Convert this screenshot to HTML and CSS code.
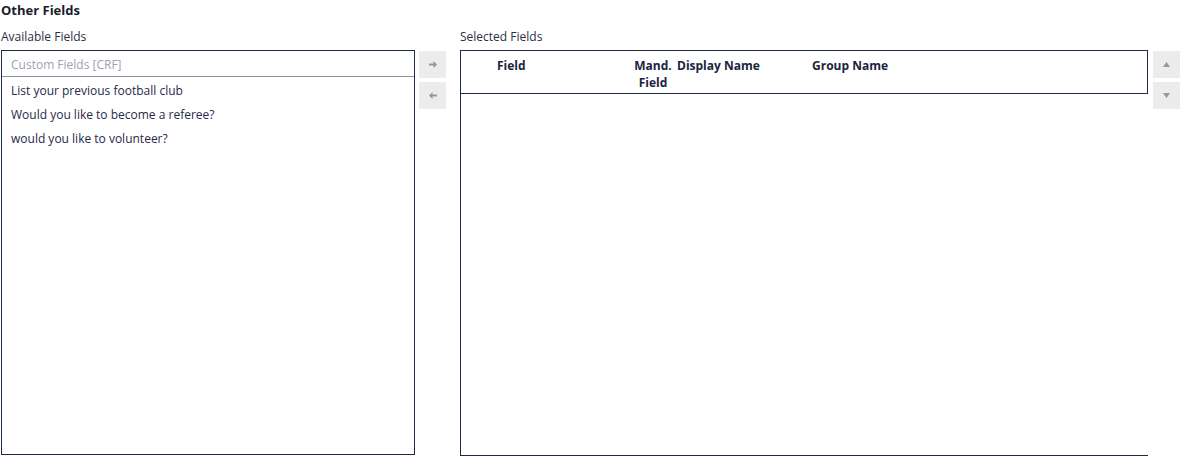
FILE: index.html
```html
<!DOCTYPE html>
<html>
<head>
<meta charset="utf-8">
<link rel="stylesheet" href="styles.css">
</head>
<body>
<div class="page">
  <h3 class="title">Other Fields</h3>
  <div class="columns">
    <div class="col-left">
      <div class="label">Available Fields</div>
      <div class="left-row">
        <div class="list-box">
          <div class="list-head">Custom Fields [CRF]</div>
          <div class="list-item">List your previous football club</div>
          <div class="list-item">Would you like to become a referee?</div>
          <div class="list-item">would you like to volunteer?</div>
        </div>
        <div class="btns">
          <div class="btn"><svg width="8" height="7" viewBox="0 0 8 7"><path d="M0 2.5h4.5V0L8 3.5 4.5 7V4.5H0z" fill="#9297a0"/></svg></div>
          <div class="btn"><svg width="8" height="7" viewBox="0 0 8 7"><path d="M8 2.5H3.5V0L0 3.5 3.5 7V4.5H8z" fill="#9297a0"/></svg></div>
        </div>
      </div>
    </div>
    <div class="col-right">
      <div class="label">Selected Fields</div>
      <div class="right-row">
        <div class="sel-box">
          <div class="sel-head">
            <div class="h-field">Field</div>
            <div class="h-mand">Mand.<br>Field</div>
            <div class="h-disp">Display Name</div>
            <div class="h-group">Group Name</div>
          </div>
        </div>
        <div class="btns">
          <div class="btn"><svg width="7" height="5" viewBox="0 0 7 5"><path d="M0 5L3.5 0 7 5z" fill="#9297a0"/></svg></div>
          <div class="btn"><svg width="7" height="5" viewBox="0 0 7 5"><path d="M0 0h7L3.5 5z" fill="#9297a0"/></svg></div>
        </div>
      </div>
    </div>
  </div>
</div>
</body>
</html>
```

FILE: styles.css
```css
html, body {
  margin: 0;
  padding: 0;
  background: #fff;
}
body {
  font-family: "Open Sans", "Noto Sans", sans-serif;
  font-size: 12px;
  color: #1b2440;
}
.page {
  padding: 2px 0 0 1px;
}
.title {
  margin: 0;
  font-size: 13px;
  font-weight: 700;
  line-height: 17px;
  color: #1a1d2b;
}
.columns {
  display: flex;
  margin-top: 9px;
}
.label {
  line-height: 16px;
  height: 21px;
  padding-top: 1px;
  color: #2b2f45;
}
.col-left {
  width: 459px;
}
.left-row, .right-row {
  display: flex;
  gap: 4px;
}
.list-box {
  width: 412px;
  height: 403px;
  border: 1px solid #1c2a46;
}
.list-head {
  height: 23px;
  line-height: 23px;
  padding-top: 2px;
  padding-left: 9px;
  color: #9ea3ab;
  border-bottom: 1px solid #8c95a6;
}
.list-item {
  height: 24px;
  line-height: 24px;
  padding-left: 9px;
  color: #262a4c;
}
.list-head + .list-item {
  margin-top: 2px;
}
.btns {
  display: flex;
  flex-direction: column;
  gap: 4px;
  padding-top: 1px;
}
.btn {
  width: 27px;
  height: 27px;
  background: #ececec;
  display: flex;
  align-items: center;
  justify-content: center;
}
.right-row {
  gap: 5px;
}
.sel-box {
  width: 687px;
  height: 404px;
  border-left: 1px solid #1c2a46;
  border-top: 1px solid #1c2a46;
  border-bottom: 1px solid #1c2a46;
}
.sel-head {
  display: flex;
  border-right: 1px solid #1c2a46;
  border-bottom: 1px solid #1c2a46;
  font-weight: 700;
  color: #1b2440;
  line-height: 17px;
  padding-top: 6px;
  height: 36px;
}
.h-field {
  width: 134px;
  padding-left: 36px;
}
.h-mand {
  width: 44px;
  text-align: center;
}
.h-disp {
  width: 135px;
  padding-left: 2px;
}
.h-group {
  width: 120px;
}
```
